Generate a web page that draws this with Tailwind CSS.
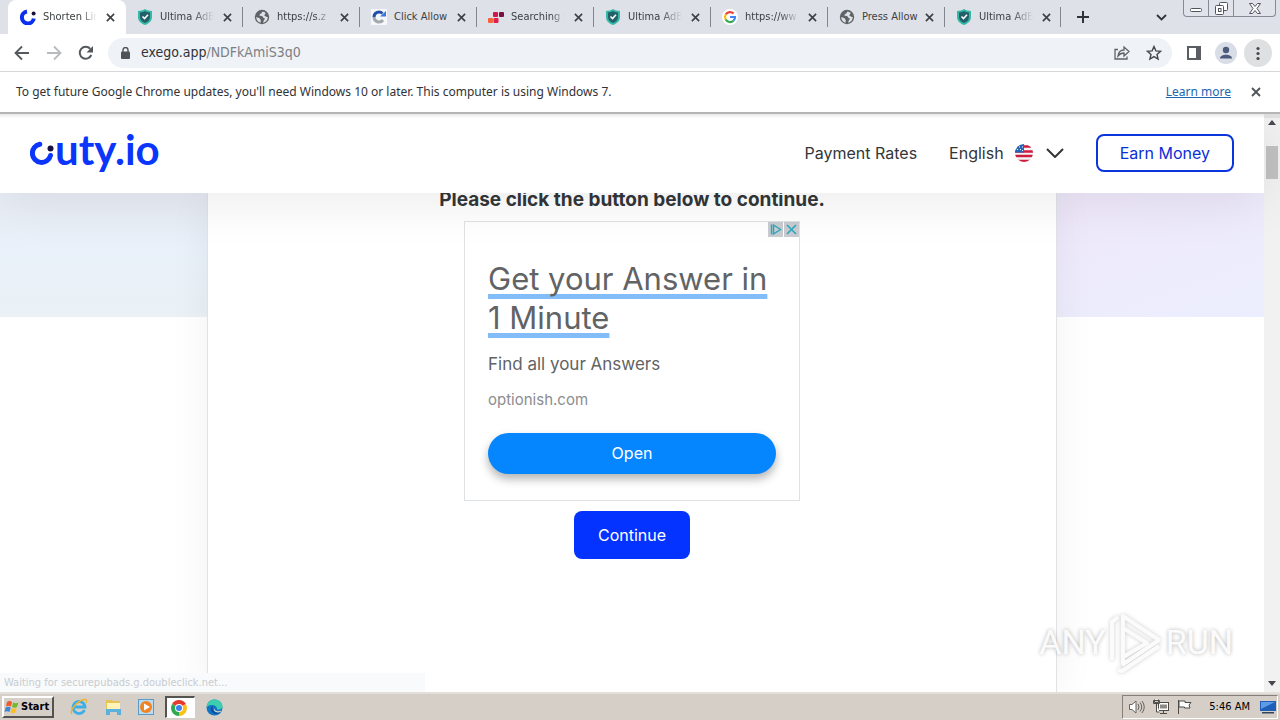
<!DOCTYPE html>
<html lang="en">
<head>
<meta charset="utf-8">
<meta name="viewport" content="width=device-width, initial-scale=1">
<title>Shorten Links</title>
<script src="https://cdn.jsdelivr.net/npm/@tailwindcss/browser@4"></script>
</head>
<body class="flex h-screen flex-col overflow-hidden bg-white font-['DejaVu_Sans_Condensed','DejaVu_Sans',sans-serif] text-[#202124]">

<svg class="hidden" aria-hidden="true">
  <symbol id="x" viewBox="0 0 10 10"><path d="M1 1l8 8M9 1L1 9" stroke="currentColor" stroke-width="1.8" fill="none"/></symbol>
  <symbol id="shield" viewBox="0 0 16 16"><path d="M8 0C5.500 1.500 3.500 1.800 1 2v6c0 4 3 6.500 7 8 4-1.500 7-4 7-8V2c-2.500-.2-4.500-.5-7-2z" fill="#35b8a6"/><path d="M8 2C6.300 3 4.800 3.400 3 3.500V8c0 3 2 4.800 5 6 3-1.200 5-3 5-6V3.500C11.200 3.400 9.700 3 8 2z" fill="#23606a"/><path d="M5.500 7.500l2 2L11 5.800" stroke="#fff" stroke-width="1.600" fill="none"/></symbol>
  <symbol id="globe" viewBox="0 0 16 16"><circle cx="8" cy="8" r="7.200" fill="#5f6368"/><path d="M8.500 2.500c-1 1-.5 2-2 2.300-.8.200-.5 1.500-1.500 1.700l2.800.5c1.500.3.800 1.800 2.200 2 1 .2 1 1.300 0 2l-1 2.800c3-.5 4.800-2.800 4.800-5.800-1 .5-1.500-.7-2.300-.7-1 0-1.500-1-.7-1.700.7-.6 1-1 .4-2zM2.200 8l3.300 1.200c1 .4.500 1.500 1.300 2l-.3 2.500C4 13 2.200 11 2.200 8z" fill="#dee1e6"/></symbol>
</svg>

<header class="shrink-0">
  <div class="flex h-[34px] items-start bg-[#dee1e8] pl-2">
    <div role="tablist" class="flex h-full text-[11px] text-[#3c4043]">
      <div class="flex h-full w-[118px] items-center gap-[7px] rounded-t-lg bg-white pl-3">
        <svg class="size-4 shrink-0" viewBox="0 0 16 16"><path d="M7 2.500A6 6 0 1 0 13.800 9.500" fill="none" stroke="#0b2ff0" stroke-width="4"/><circle cx="13.600" cy="4.500" r="2" fill="#1a1040"/></svg>
        <button role="tab" aria-selected="true" class="w-[54px] overflow-hidden text-left whitespace-nowrap [mask-image:linear-gradient(to_right,#000_70%,transparent)]">Shorten Lin</button>
        <button aria-label="Close tab" class="ml-[2px]"><svg class="size-[9px]"><use href="#x"/></svg></button>
      </div>
      <div class="flex h-full w-[116px] items-center gap-[7px] pl-[11px]">
        <svg class="size-4 shrink-0"><use href="#shield"/></svg>
        <button role="tab" class="w-[54px] overflow-hidden text-left whitespace-nowrap [mask-image:linear-gradient(to_right,#000_60%,transparent)]">Ultima AdB</button>
        <button aria-label="Close tab" class="ml-[2px]"><svg class="size-[9px]"><use href="#x"/></svg></button>
      </div>
      <div class="flex h-full w-[117px] items-center"><span class="h-5 w-px bg-[#80868b]"></span><span class="flex items-center gap-[7px] pl-[11px]">
        <svg class="size-4 shrink-0"><use href="#globe"/></svg>
        <button role="tab" class="w-[54px] overflow-hidden text-left whitespace-nowrap [mask-image:linear-gradient(to_right,#000_70%,transparent)]">https://s.z</button>
        <button aria-label="Close tab" class="ml-[2px]"><svg class="size-[9px]"><use href="#x"/></svg></button></span>
      </div>
      <div class="flex h-full w-[117px] items-center"><span class="h-5 w-px bg-[#80868b]"></span><span class="flex items-center gap-[7px] pl-[11px]">
        <svg class="size-4 shrink-0" viewBox="0 0 16 16"><path d="M0 0h16v16H0z" fill="#f5f7fa"/><path d="M3 8a5 5 0 0 1 8.500-3.500" fill="none" stroke="#244fa8" stroke-width="3"/><path d="M9 7.500h6V2z" fill="#3a78d8"/><path d="M3 8a5 5 0 0 0 9 3" fill="none" stroke="#a5a9ae" stroke-width="3"/></svg>
        <button role="tab" class="w-[54px] overflow-hidden text-left whitespace-nowrap">Click Allow</button>
        <button aria-label="Close tab" class="ml-[2px]"><svg class="size-[9px]"><use href="#x"/></svg></button></span>
      </div>
      <div class="flex h-full w-[117px] items-center"><span class="h-5 w-px bg-[#80868b]"></span><span class="flex items-center gap-[7px] pl-[11px]">
        <svg class="size-4 shrink-0" viewBox="0 0 16 16"><rect x="5" y="3" width="5" height="5" rx="1" fill="#d4144c"/><rect x="11" y="3" width="5" height="5" rx="1" fill="#7a1040"/><rect y="9" width="5" height="5" rx="1" fill="#f4633a"/><rect x="5.500" y="9" width="5" height="5" rx="1" fill="#e0204c"/></svg>
        <button role="tab" class="w-[54px] overflow-hidden text-left whitespace-nowrap [mask-image:linear-gradient(to_right,#000_75%,transparent)]">Searching f</button>
        <button aria-label="Close tab" class="ml-[2px]"><svg class="size-[9px]"><use href="#x"/></svg></button></span>
      </div>
      <div class="flex h-full w-[117px] items-center"><span class="h-5 w-px bg-[#80868b]"></span><span class="flex items-center gap-[7px] pl-[11px]">
        <svg class="size-4 shrink-0"><use href="#shield"/></svg>
        <button role="tab" class="w-[54px] overflow-hidden text-left whitespace-nowrap [mask-image:linear-gradient(to_right,#000_60%,transparent)]">Ultima AdB</button>
        <button aria-label="Close tab" class="ml-[2px]"><svg class="size-[9px]"><use href="#x"/></svg></button></span>
      </div>
      <div class="flex h-full w-[117px] items-center"><span class="h-5 w-px bg-[#80868b]"></span><span class="flex items-center gap-[7px] pl-[11px]">
        <svg class="size-4 shrink-0" viewBox="0 0 16 16"><circle cx="8" cy="8" r="8" fill="#fff"/><g fill="none" stroke-width="2.200"><path d="M11.600 4.600A5 5 0 0 0 3.700 5.500" stroke="#ea4335"/><path d="M3.700 5.500a5 5 0 0 0 0 5" stroke="#fbbc05"/><path d="M3.700 10.500a5 5 0 0 0 7.800 1.200" stroke="#34a853"/><path d="M11.500 11.700A5 5 0 0 0 13 8H8" stroke="#4285f4"/></g></svg>
        <button role="tab" class="w-[54px] overflow-hidden text-left whitespace-nowrap [mask-image:linear-gradient(to_right,#000_65%,transparent)]">https://ww</button>
        <button aria-label="Close tab" class="ml-[2px]"><svg class="size-[9px]"><use href="#x"/></svg></button></span>
      </div>
      <div class="flex h-full w-[117px] items-center"><span class="h-5 w-px bg-[#80868b]"></span><span class="flex items-center gap-[7px] pl-[11px]">
        <svg class="size-4 shrink-0"><use href="#globe"/></svg>
        <button role="tab" class="w-[54px] text-left whitespace-nowrap">Press Allow</button>
        <button aria-label="Close tab" class="ml-[2px]"><svg class="size-[9px]"><use href="#x"/></svg></button></span>
      </div>
      <div class="flex h-full w-[116px] items-center"><span class="h-5 w-px bg-[#80868b]"></span><span class="flex items-center gap-[7px] pl-[11px]">
        <svg class="size-4 shrink-0"><use href="#shield"/></svg>
        <button role="tab" class="w-[54px] overflow-hidden text-left whitespace-nowrap [mask-image:linear-gradient(to_right,#000_60%,transparent)]">Ultima AdB</button>
        <button aria-label="Close tab" class="ml-[2px]"><svg class="size-[9px]"><use href="#x"/></svg></button></span>
      </div>
    </div>
    <div class="flex h-full items-center"><span class="h-5 w-px bg-[#80868b]"></span>
      <button aria-label="New tab" class="ml-4"><svg class="size-3" viewBox="0 0 12 12"><path d="M6 0v12M0 6h12" stroke="#303338" stroke-width="2"/></svg></button></div>
    <button aria-label="Search tabs" class="ml-auto flex h-full items-center"><svg class="h-[7px] w-[11px]" viewBox="0 0 11 7"><path d="M1 1l4.500 4.500L10 1" fill="none" stroke="#303338" stroke-width="1.800"/></svg></button>
    <div class="mr-1 ml-4 flex h-[17px] w-[93px] divide-x divide-[#858a94] rounded-b border border-t-0 border-[#858a94] bg-[#e0e3e9] text-[#50545c]">
      <button aria-label="Minimize" class="flex w-[25px] items-center justify-center pt-1"><svg class="h-1 w-3" viewBox="0 0 12 4"><rect x=".5" y=".5" width="11" height="3" rx="1" fill="#fff" stroke="currentColor"/></svg></button>
      <button aria-label="Restore" class="flex w-[25px] items-center justify-center"><svg class="size-[13px]" viewBox="0 0 13 13" fill="#fff" stroke="currentColor"><rect x="4.500" y=".5" width="8" height="8" rx="1"/><rect x=".5" y="3.500" width="8" height="9" rx="1"/><rect x="3.500" y="6.500" width="2.500" height="3"/></svg></button>
      <button aria-label="Close" class="flex flex-1 items-center justify-center"><svg class="h-[11px] w-3" viewBox="0 0 12 11"><path d="M.5.500h3L6 3.500 8.500.500h3L8 5.500l3.500 5h-3L6 7.500l-2.500 3h-3L4 5.500z" fill="#fff" stroke="currentColor"/></svg></button>
    </div>
  </div>

  <div class="flex h-[38px] items-center border-b border-[#d5d7da] bg-white pr-2 pl-[14px] text-[#5f6368]">
    <button aria-label="Back"><svg class="size-4" viewBox="0 0 16 16" fill="none" stroke="#55585c" stroke-width="1.800"><path d="M15 8H2M8 1.500L1.500 8 8 14.500"/></svg></button>
    <button aria-label="Forward" disabled class="ml-4"><svg class="size-4" viewBox="0 0 16 16" fill="none" stroke="#b8babd" stroke-width="1.800"><path d="M1 8h13M8 1.500L14.500 8 8 14.500"/></svg></button>
    <button aria-label="Reload" class="ml-4"><svg class="size-4" viewBox="0 0 16 16"><path d="M13.300 10A6 6 0 1 1 12.300 3.800" fill="none" stroke="#55585c" stroke-width="2"/><path d="M15 1v6.500H8.500z" fill="#55585c"/></svg></button>
    <div class="ml-[14px] flex h-[30px] flex-1 items-center rounded-full bg-[#eff2f6] pr-[10px] pl-[13px]">
      <svg class="h-3 w-[9px]" viewBox="0 0 9 12"><rect y="4.500" width="9" height="7.500" rx="1" fill="#505357"/><path d="M2 5V3a2.500 2.500 0 0 1 5 0v2" fill="none" stroke="#505357" stroke-width="1.400"/></svg>
      <div contenteditable="true" role="textbox" aria-label="Address bar" class="ml-[11px] flex-1 text-[14px] text-[#7c8085]"><span class="text-[#303236]">exego.app</span>/NDFkAmiS3q0</div>
      <button aria-label="Share"><svg class="h-[14px] w-4" viewBox="0 0 16 14" fill="none" stroke="#5f6368" stroke-width="1.300"><path d="M4 3.500H1V13h12v-2.500M4 10c.5-4 3-6 6-6V1l5 4.500L10 10V7C7.500 7 5.500 8 4 10z"/></svg></button>
      <button aria-label="Bookmark" class="ml-4"><svg class="size-4" viewBox="0 0 16 16"><path d="M8 1.500l1.900 4.400 4.700.4-3.600 3.100 1.100 4.700L8 11.600l-4.100 2.500L5 9.400 1.400 6.300l4.700-.4z" fill="none" stroke="#44474b" stroke-width="1.400"/></svg></button>
    </div>
    <button aria-label="Side panel" class="ml-[15px]"><svg class="size-[14px]" viewBox="0 0 14 14"><path d="M0 0h14v14H0z" fill="#5a5d61"/><path d="M2 2h7v10H2z" fill="#fff"/></svg></button>
    <button aria-label="Profile" class="ml-[14px]"><svg class="size-[22px]" viewBox="0 0 22 22"><circle cx="11" cy="11" r="11" fill="#d9dde6"/><circle cx="11" cy="8" r="3.200" fill="#4c5a7c"/><path d="M5 16.500c0-5 12-5 12 0z" fill="#4c5a7c"/></svg></button>
    <button aria-label="Menu" class="ml-[7px]"><svg class="size-7" viewBox="0 0 28 28"><circle cx="14" cy="14" r="14" fill="#dfe0e2"/><g fill="#45484c"><circle cx="14" cy="9.500" r="1.600"/><circle cx="14" cy="14.500" r="1.600"/><circle cx="14" cy="19.500" r="1.600"/></g></svg></button>
  </div>

  <div class="flex h-[42px] items-center border-b-2 border-[#b4b5b7] bg-white pr-[19px] pl-4 font-['Noto_Sans',sans-serif] text-[12px] text-[#303236]">
    <p>To get future Google Chrome updates, you'll need Windows 10 or later. This computer is using Windows 7.</p>
    <a href="#learn" class="ml-auto text-[#2365b0] underline">Learn more</a>
    <button aria-label="Dismiss" class="ml-5 text-[#505357]"><svg class="size-[10px]"><use href="#x"/></svg></button>
  </div>
</header>

<div class="relative flex min-h-0 flex-1 overflow-hidden font-[Inter,sans-serif]">
  <div class="relative flex min-w-0 flex-1 flex-col">
    <div class="relative z-10 flex h-[79px] shrink-0 items-center bg-linear-to-b from-[#e8e8e8] to-white to-[4px] px-[30px] pb-[2px] text-[16px] text-[#333639] shadow-[0_10px_50px_rgba(0,0,0,0.08)]">
      <a href="#home" aria-label="cuty.io" class="flex items-center text-[#0b35fa]">
        <svg class="h-6 w-[25px]" viewBox="0 0 25 24"><path d="M9.800 3.200A9.200 9.200 0 1 0 20.500 14.500" fill="none" stroke="currentColor" stroke-width="5" stroke-linecap="round"/><circle cx="20.500" cy="7.500" r="3" fill="#1a1040"/></svg>
        <span class="pb-2 font-[Lato,sans-serif] text-[42px] leading-[48px] font-bold">uty.io</span>
      </a>
      <nav class="ml-auto flex items-center gap-8">
        <a href="#rates">Payment Rates</a>
        <button class="flex items-center">English
          <svg class="ml-[10px] size-5" viewBox="0 0 20 20"><clipPath id="fc"><circle cx="10" cy="10" r="9"/></clipPath><g clip-path="url(#fc)"><path d="M0 0h20v20H0z" fill="#f4f4f6"/><path d="M0 3.500h20M0 8.500h20M0 13h20M0 18h20" stroke="#cf1b3c" stroke-width="2.400"/><path d="M0 0h10v9.500H0z" fill="#2664b4"/><path d="M3 6.500h1M6 6.500h1M5 4h1M8 4h1M8 7.500h1" stroke="#fff"/></g></svg>
          <svg class="ml-3 h-[10px] w-[18px]" viewBox="0 0 18 10"><path d="M1 1l8 8 8-8" fill="none" stroke="#333639" stroke-width="2"/></svg>
        </button>
        <button class="h-[38px] rounded-lg border-2 border-[#0b35dc] px-[22px] text-[#0b2fd8]">Earn Money</button>
      </nav>
    </div>

    <div class="grid min-h-0 flex-1 grid-rows-[minmax(0,1fr)] overflow-hidden bg-white">
      <div class="flex h-[124px] [grid-area:1/1]">
        <div class="flex-1 bg-linear-to-b from-[#e9edf5] via-[#e9f1fa] to-[#ebf1f5]"></div>
        <div class="flex-1 bg-linear-160 from-[#f0e6f8] via-[#efe9fb] to-[#ebeefe]"></div>
      </div>
      <main class="z-1 mx-auto flex w-[850px] max-w-full flex-col items-center border-x border-[#e0e2e5] bg-white shadow-[0_0_40px_rgba(0,0,0,0.06)] [grid-area:1/1]">
        <h1 class="text-[19px] leading-[14px] font-bold text-[#333639]">Please click the button below to continue.</h1>
        <section aria-label="Advertisement" class="relative mt-[14px] flex h-[280px] w-[336px] flex-col border border-[#dfe2e4] px-[23px] pt-[37px] text-[#616365]">
          <div class="absolute top-0 right-0 flex gap-px">
            <button aria-label="Ad choices" class="bg-[#c9cbd0]"><svg class="size-[15px]" viewBox="0 0 15 15"><path d="M3.500 2.500v10M5.500 3l7 4.500-7 4.500z" fill="none" stroke="#28aabd" stroke-width="1.400"/></svg></button>
            <button aria-label="Close ad" class="bg-[#c9cbd0]"><svg class="size-[15px]" viewBox="0 0 15 15"><path d="M3 3l9 9M12 3l-9 9" stroke="#28aabd" stroke-width="1.600"/></svg></button>
          </div>
          <a href="#ad" class="text-[31px] leading-[39px] underline decoration-[#82bdfa] decoration-[5px] underline-offset-[4px] [text-decoration-skip-ink:none]">Get your Answer in<br>1 Minute</a>
          <p class="mt-[15px] text-[17px] leading-6">Find all your Answers</p>
          <p class="mt-3 text-[15px] leading-6 text-[#8b8d8f]">optionish.com</p>
          <button class="mt-[21px] h-[41px] w-full rounded-full bg-[#0586ff] pb-[2px] text-[16px] text-white shadow-[0_5px_10px_rgba(0,0,0,0.3)]">Open</button>
        </section>
        <button class="mt-[10px] h-12 rounded-lg bg-[#0432ff] px-6 text-[16px] text-white">Continue</button>
      </main>
    </div>

    <div class="absolute bottom-0 left-0 z-20 h-[19px] w-[425px] bg-[#f8fafc] pl-1 font-['DejaVu_Sans_Condensed','DejaVu_Sans',sans-serif] text-[11px] leading-[19px] text-[#c9ccd0]">Waiting for securepubads.g.doubleclick.net...</div>
    <div class="absolute right-[31px] bottom-[18px] z-20 flex items-center font-[Roboto,sans-serif] text-[34px] leading-[64px] text-white/90 [text-shadow:0_0_4px_rgba(0,0,0,0.3)]">
      <span>ANY</span>
      <svg class="h-16 w-[60px] drop-shadow-[0_0_2px_rgba(0,0,0,0.2)]" viewBox="0 0 60 64"><path d="M17 53V6l36 24-37 25M17 53V18l24 15-24 14M6 50V12l6-5M12 60l4 1 37-25" fill="none" stroke="#fbfbfb" stroke-width="4" stroke-linejoin="round"/></svg>
      <span>RUN</span>
    </div>
  </div>
  <div aria-hidden="true" class="flex w-4 shrink-0 flex-col items-center border-t-4 border-[#e0e0e0] bg-[#f1f1f1] pt-[2px] pb-[3px]">
    <svg class="h-[5px] w-2" viewBox="0 0 8 5"><path d="M0 5l4-5 4 5z" fill="#45484c"/></svg>
    <div class="mt-[21px] h-[33px] w-3 bg-[#c1c1c1]"></div>
    <svg class="mt-auto mb-[3px] h-[5px] w-2" viewBox="0 0 8 5"><path d="M0 0l4 5 4-5z" fill="#45484c"/></svg>
  </div>
</div>

<footer class="flex h-7 shrink-0 items-center border-t-2 border-[#e3e0dc] bg-[#d5cfc8] pl-[2px] text-black">
  <button class="flex h-[22px] w-[52px] items-center gap-px border-2 border-t-white border-r-[#55534f] border-b-[#55534f] border-l-white text-[11px] font-bold">
    <svg class="size-4" viewBox="0 0 16 16"><path d="M3 3q2.500-2 5 0L7 7.500q-2.500-1.500-5 0z" fill="#f0592c"/><path d="M9 3.500q2.500 1.500 5.500 0L13 8q-2.500 1.500-5 0z" fill="#76b82a"/><path d="M1.700 8.500q2.500-1.500 5 0L5.500 13Q3 11.500.5 13z" fill="#3a87d8"/><path d="M7.700 9q2.500 1.500 5 0l-1.200 4.500q-2.500 1.500-5 0z" fill="#fbbf24"/></svg>Start</button>
  <button aria-label="Internet Explorer" class="ml-4"><svg class="size-[18px]" viewBox="0 0 18 18" fill="none"><path d="M14.500 12A6 6 0 1 1 15 9H4" stroke="#3caee8" stroke-width="2.800"/><path d="M2 16C-1 13 7 3 14 1.500c3-.5 3 1.500 2 3.500" stroke="#e8b530" stroke-width="1.400"/></svg></button>
  <button aria-label="Explorer" class="ml-4"><svg class="size-[18px]" viewBox="0 0 18 18"><path d="M2 2h6l1 1h7v10H2z" fill="#e6c455"/><path d="M3 5h13v6H3z" fill="#fff3b8"/><path d="M2 17v-6h15v6h-4v-3H6v3z" fill="#5bb0dc"/></svg></button>
  <button aria-label="Media Player" class="ml-4"><svg class="size-[17px]" viewBox="0 0 17 17"><rect x=".5" y=".5" width="15" height="15" fill="#b9dbf3" stroke="#5b9bc9"/><circle cx="8" cy="8" r="6" fill="#f08322"/><path d="M6 4.500v7L12 8z" fill="#fff"/></svg></button>
  <button aria-label="Chrome" class="ml-[10px] flex h-[22px] w-[30px] items-center justify-center border border-t-2 border-l-2 border-[#55534f] border-r-white border-b-white bg-white pr-1"><svg class="size-4" viewBox="0 0 16 16"><path d="M8 8L1.100 4A8 8 0 0 1 14.900 4z" fill="#e33b2e"/><path d="M8 8l6.900-4A8 8 0 0 1 8 16z" fill="#fbc116"/><path d="M8 8v8A8 8 0 0 1 1.100 4z" fill="#2da94f"/><circle cx="8" cy="8" r="4" fill="#fff"/><circle cx="8" cy="8" r="3" fill="#3d82ee"/></svg></button>
  <button aria-label="Edge" class="ml-[11px]"><svg class="size-[17px]" viewBox="0 0 17 17"><circle cx="8.500" cy="8.500" r="8" fill="#1274c4"/><path d="M.5 8.500C1 3 5 .5 8.500.500c5 0 8 3.500 8 6.500 0 3-3 4-5.500 3.500 1-4-7-7-10.500-2z" fill="#3ccfae"/><path d="M7 7c-2 5 3 8 8 6-5 4-10 1-10-3 0-1.500 1-2.500 2-3z" fill="#0b4b98"/><path d="M8 9c0 3 4 4 7.500 2.500l-1 1.500C10 14.500 7 12 8 9z" fill="#d5cfc8"/></svg></button>

  <div class="mr-[2px] ml-auto flex h-[24px] items-center border border-t-[#858079] border-r-white border-b-white border-l-[#858079] pr-[1px] pl-[6px] text-[11px]">
    <svg class="size-4" viewBox="0 0 16 16" fill="#fff" stroke="#66635f"><path d="M.5 5.500H3L7 2v12L3 10.500H.500z"/><path d="M9 5q2 3 0 6M11 3.500q3.500 4.500 0 9M13 2q4.500 6 0 12" fill="none"/></svg>
    <svg class="ml-2 size-4" viewBox="0 0 16 16" fill="#fff" stroke="#4e4b47"><rect x="5.500" y="3.500" width="10" height="8"/><path d="M7 5.500h7v4H7z" fill="#8b8985" stroke="none"/><path d="M10.500 12v2.500M7 14.500h7M1.500.500v3h4v-3M3.500 4v9h3M.5 1.500h6v3h-6z"/></svg>
    <svg class="ml-2 size-4" viewBox="0 0 16 16" fill="#fff" stroke="#4e4b47"><path d="M1.500 1v14M2 2h6v1.500h6L12 6l1 3H7.500V8H2z"/></svg>
    <time class="ml-4">5:46 AM</time>
    <svg class="ml-[10px] size-4" viewBox="0 0 16 16"><path d="M0 2h16v10H0z" fill="#1f5fb8"/><path d="M1 3h14L1 10z" fill="#5d9be8"/><path d="M2 13h12v1.500H2z" fill="#34445e"/></svg>
  </div>
</footer>
</body>
</html>
